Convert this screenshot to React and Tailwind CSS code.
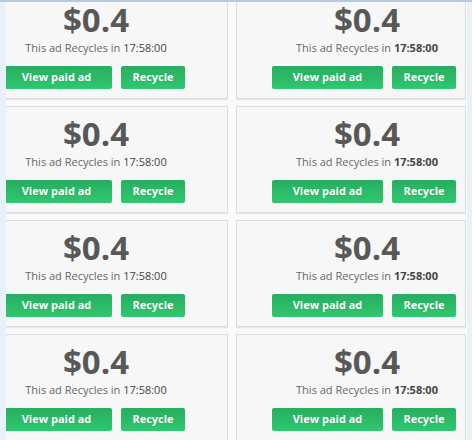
import React from 'react';

const rows = [0, 1, 2, 3];

const AdCard = ({ side }) => {
  const isLeft = side === 'left';
  return (
    <div
      className={`bg-[#f7f7f7] border border-[#dcdcdc] shadow-[0_1px_1px_rgba(0,0,0,0.08)] overflow-hidden h-[107px] ${
        isLeft ? 'border-l-0' : ''
      }`}
    >
      {/* content block, same width in both columns, offset differs */}
      <div className={`w-[192px] pt-[9px] ${isLeft ? 'ml-[-6px]' : 'ml-[34px]'}`}>
        <div className="text-center text-[33px] leading-[36px] font-bold text-[#585858]">$0.4</div>
        <div className="mt-[2px] text-center text-[11px] leading-[16px] text-[#666666]">
          This ad Recycles in{' '}
          <span className={isLeft ? 'text-[#444444]' : 'font-bold text-[#444444]'}>17:58:00</span>
        </div>
        <div className="mt-[10px] ml-[1px] flex gap-[9px]">
          <button className="w-[111px] h-[23px] rounded-[2px] bg-gradient-to-b from-[#27ad5f] to-[#2fc86f] text-white text-[11px] font-bold [text-shadow:0_0_1px_rgba(0,0,0,0.15)]">
            View paid ad
          </button>
          <button className="w-[64px] h-[23px] rounded-[2px] bg-gradient-to-b from-[#27ad5f] to-[#2fc86f] text-white text-[11px] font-bold [text-shadow:0_0_1px_rgba(0,0,0,0.15)]">
            Recycle
          </button>
        </div>
      </div>
    </div>
  );
};

export default function App() {
  return (
    <div className="relative w-[472px] h-[440px] overflow-hidden bg-[#fafafa] font-['Open_Sans',sans-serif]">
      {/* top edge line */}
      <div className="absolute top-0 left-0 right-0 h-[2px] bg-[#b9c8de] z-10" />

      <div className="flex h-full">
        <div className="w-[6px] shrink-0 bg-[#eaf0fa]" />

        <div className="flex-1 overflow-hidden">
          <div className="mt-[-8px] flex flex-col gap-[7px]">
            {rows.map((r) => (
              <div key={r} className="grid grid-cols-[222px_230px] gap-[8px]">
                <AdCard side="left" />
                <AdCard side="right" />
              </div>
            ))}
          </div>
        </div>

        <div className="w-[1px] shrink-0 bg-white" />
        <div className="w-[5px] shrink-0 bg-[#eaf0fa]" />
      </div>
    </div>
  );
}
